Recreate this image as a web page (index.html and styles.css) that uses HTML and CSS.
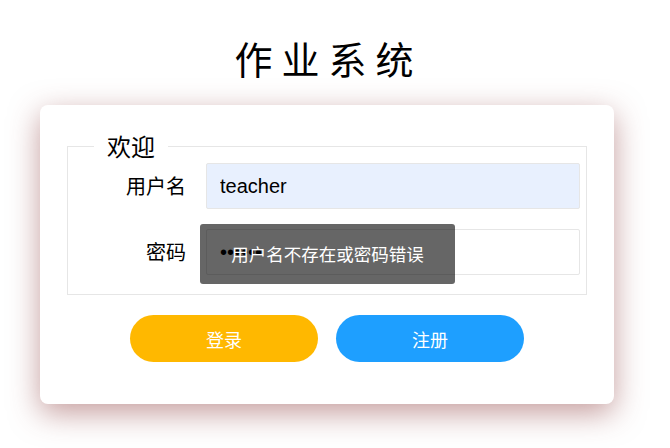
FILE: index.html
```html
<!DOCTYPE html>
<html lang="zh-CN">
<head>
<meta charset="utf-8">
<title>作业系统</title>
<link rel="stylesheet" href="styles.css">
</head>
<body>
<div class="page">
  <h1 class="title">作业系统</h1>
  <form class="card">
    <fieldset class="box">
      <legend class="box-legend">欢迎</legend>
      <div class="row">
        <label class="row-label" for="user">用户名</label>
        <input class="field field-filled" id="user" type="text" value="teacher">
      </div>
      <div class="row">
        <label class="row-label" for="pass">密码</label>
        <input class="field" id="pass" type="password" value="123456">
      </div>
    </fieldset>
    <div class="actions">
      <button class="btn btn-login" type="button">登录</button>
      <button class="btn btn-register" type="button">注册</button>
    </div>
  </form>
</div>
<div class="toast">用户名不存在或密码错误</div>
</body>
</html>
```

FILE: styles.css
```css
html, body {
  margin: 0;
  padding: 0;
  background: #ffffff;
}

body {
  font-family: "Liberation Sans", "Noto Sans CJK SC", sans-serif;
  color: #000000;
  min-height: 448px;
}

.page {
  width: 574px;
  margin-left: 40px;
  padding-top: 34px;
  padding-bottom: 44px;
}

.title {
  margin: 0 0 23px 0;
  font-family: "Noto Sans CJK SC", sans-serif;
  font-weight: 400;
  font-size: 38px;
  line-height: 48px;
  letter-spacing: 9px;
  text-align: center;
  padding-left: 3px;
}

.card {
  display: block;
  background: #ffffff;
  border-radius: 8px;
  box-shadow: 0 9px 30px rgba(140, 60, 60, 0.5);
  padding: 27px 27px 42px 27px;
  margin: 0;
}

.box {
  margin: 0;
  border: 1px solid #e6e6e6;
  padding: 3px 6px 19px 0;
  display: flex;
  flex-direction: column;
  gap: 20px;
}

.box-legend {
  margin-left: 26px;
  padding: 0 13px;
  font-family: "Noto Sans CJK SC", sans-serif;
  font-size: 24px;
  line-height: 28px;
  color: #000000;
}

.row {
  display: flex;
  align-items: center;
  gap: 20px;
}

.row-label {
  width: 118px;
  text-align: right;
  font-family: "Noto Sans CJK SC", sans-serif;
  font-size: 20px;
  line-height: 28px;
}

.field {
  box-sizing: border-box;
  width: 374px;
  height: 46px;
  border: 1px solid #e6e6e6;
  border-radius: 2px;
  padding: 0 13px;
  font-family: "Liberation Sans", sans-serif;
  font-size: 20px;
  color: #000000;
  background: #ffffff;
  outline: none;
}

.field-filled {
  background: #e8f0fe;
}

.actions {
  display: flex;
  justify-content: center;
  gap: 18px;
  margin-top: 20px;
}

.btn {
  width: 188px;
  height: 47px;
  border: none;
  border-radius: 24px;
  color: #ffffff;
  font-family: "Noto Sans CJK SC", sans-serif;
  font-size: 18px;
  cursor: pointer;
}

.btn-login {
  background: #ffb800;
}

.btn-register {
  background: #1e9fff;
}

.toast {
  position: absolute;
  left: 200px;
  top: 224px;
  width: 255px;
  height: 60px;
  line-height: 60px;
  text-align: center;
  background: rgba(0, 0, 0, 0.6);
  border-radius: 3px;
  color: #ffffff;
  font-family: "Noto Sans CJK SC", sans-serif;
  font-size: 17.5px;
}
```
